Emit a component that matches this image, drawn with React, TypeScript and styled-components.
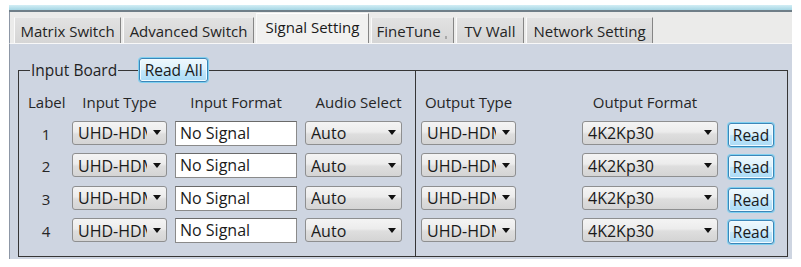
import React from 'react';
import styled, { createGlobalStyle } from 'styled-components';

const Global = createGlobalStyle`
  html, body { margin: 0; padding: 0; background: #ffffff; }
  body {
    font-family: "Open Sans", "Noto Sans", "Liberation Sans", sans-serif;
    font-size: 15px;
    color: #222222;
  }
  * { box-sizing: border-box; }
`;

const Window = styled.div`
  margin: 5px 0 0 9px;
  width: 783px;
  height: 254px;
  display: flex;
  flex-direction: column;
`;

const TitleStrip = styled.div`
  height: 7px;
  background: linear-gradient(#d3eef5, #a5d6e4);
  border-bottom: 2px solid #6f7e88;
`;

const TabBar = styled.div`
  height: 32px;
  background: #ebebea;
  border-left: 1px solid #8d97a6;
  border-bottom: 1px solid #f8f8f8;
  display: flex;
  align-items: flex-end;
  padding-left: 4px;
  gap: 2px;
`;

const Tab = styled.div<{ $w: number; $active?: boolean; $mark?: boolean }>`
  position: relative;
  width: ${(p) => p.$w}px;
  height: ${(p) => (p.$active ? 30 : 26)}px;
  padding-bottom: ${(p) => (p.$active ? 3 : 0)}px;
  display: flex;
  align-items: center;
  justify-content: center;
  white-space: nowrap;
  font-size: 15px;
  color: ${(p) => (p.$active ? '#1a1a1a' : '#242424')};
  background: ${(p) =>
    p.$active ? '#f1f1f0' : 'linear-gradient(#e2e2e2, #d5d5d5)'};
  border-left: 1px solid #fafafa;
  border-right: 1px solid #858585;
  border-top: 1px solid ${(p) => (p.$active ? '#ffffff' : '#ececec')};
  &::after {
    content: '';
    display: ${(p) => (p.$mark ? 'block' : 'none')};
    position: absolute;
    right: 6px;
    bottom: 4px;
    width: 2px;
    height: 3px;
    background: #a8a8a8;
  }
`;

const Panel = styled.div`
  flex: 1;
  background: #ced5e1;
  border-left: 1px solid #8d97a6;
  padding: 26px 4px 0 8px;
`;

const GroupBox = styled.div`
  position: relative;
  border: 1px solid #363636;
  display: grid;
  grid-template-columns: 396px 1fr;
`;

const Legend = styled.div`
  position: absolute;
  top: -13px;
  left: 11px;
  display: flex;
  align-items: center;
  gap: 21px;
`;

const LegendTitle = styled.span`
  background: #ced5e1;
  line-height: 22px;
  padding: 0 1px;
  font-size: 15.5px;
  color: #1f1f1f;
`;

const BlueButton = styled.button<{ $w: number }>`
  width: ${(p) => p.$w}px;
  height: 24px;
  padding: 0;
  font: inherit;
  font-size: 15.5px;
  color: #1a1a1a;
  border: 1px solid #3c86b8;
  border-radius: 3px;
  box-shadow: 0 0 0 1px #7fd0f0, inset 0 0 0 1px #f2fbff;
  background: linear-gradient(#eef8fd 0%, #dcf1fc 48%, #c3e7fb 52%, #aadbf6 100%);
  display: flex;
  align-items: center;
  justify-content: center;
  line-height: 22px;
`;

const ReadButton = styled(BlueButton)`
  margin-top: 2px;
`;

const Section = styled.div<{ $cols: string; $pad: number; $divider?: boolean }>`
  display: grid;
  grid-template-columns: ${(p) => p.$cols};
  grid-template-rows: 21px repeat(4, 25px);
  column-gap: 8px;
  row-gap: 7.5px;
  padding: 21px 0 13px ${(p) => p.$pad}px;
  border-left: ${(p) => (p.$divider ? '1px solid #363636' : 'none')};
  align-items: start;
`;

const Header = styled.div<{ $w?: number; $shift?: number }>`
  width: ${(p) => (p.$w ? `${p.$w}px` : 'auto')};
  padding-left: ${(p) => p.$shift ?? 0}px;
  text-align: center;
  line-height: 21px;
  white-space: nowrap;
  color: #262626;
  justify-self: ${(p) => (p.$w ? 'start' : 'stretch')};
`;

const Num = styled.div`
  align-self: center;
  text-align: center;
  color: #262626;
  line-height: 21px;
  padding-top: 2px;
`;

const ComboBox = styled.div<{ $w: number }>`
  width: ${(p) => p.$w}px;
  height: 24px;
  border: 1px solid #8e8f90;
  border-radius: 3px;
  background: linear-gradient(#f4f4f4 0%, #ececec 45%, #dedede 55%, #d4d4d4 100%);
  display: flex;
  align-items: center;
  padding: 0 0 0 5px;
`;

const ComboText = styled.span`
  flex: 1;
  min-width: 0;
  overflow-x: clip;
  white-space: nowrap;
  line-height: 22px;
  padding-top: 1px;
  font-size: 16px;
  color: #1a1a1a;
`;

const Arrow = styled.span`
  flex: none;
  width: 0;
  height: 0;
  margin: 0 5px 0 6px;
  border-left: 4px solid transparent;
  border-right: 4px solid transparent;
  border-top: 5px solid #111;
`;

const TextBox = styled.div`
  width: 122px;
  height: 25px;
  background: #ffffff;
  border: 1px solid #8a8a8a;
  border-top-color: #6a6a6a;
  padding: 0 4px;
  line-height: 22px;
  font-size: 16px;
  white-space: nowrap;
  color: #1a1a1a;
`;

const Combo = ({ w, text }: { w: number; text: string }) => (
  <ComboBox $w={w}>
    <ComboText>{text}</ComboText>
    <Arrow />
  </ComboBox>
);

const rows = [1, 2, 3, 4];

export default function App() {
  return (
    <>
      <Global />
      <Window>
        <TitleStrip />
        <TabBar>
          <Tab $w={107}>Matrix Switch</Tab>
          <Tab $w={131}>Advanced Switch</Tab>
          <Tab $w={113} $active>Signal Setting</Tab>
          <Tab $w={83} $mark>FineTune&nbsp;&nbsp;</Tab>
          <Tab $w={68}>TV Wall</Tab>
          <Tab $w={127}>Network Setting</Tab>
        </TabBar>
        <Panel>
          <GroupBox>
            <Legend>
              <LegendTitle>Input Board</LegendTitle>
              <BlueButton $w={69}>Read All</BlueButton>
            </Legend>
            <Section $cols="36px 95px 122px 97px" $pad={9}>
              <Header>Label</Header>
              <Header>Input Type</Header>
              <Header>Input Format</Header>
              <Header $shift={10}>Audio Select</Header>
              {rows.map((n) => (
                <React.Fragment key={n}>
                  <Num>{n}</Num>
                  <Combo w={95} text="UHD-HDMI" />
                  <TextBox>No Signal</TextBox>
                  <Combo w={97} text="Auto" />
                </React.Fragment>
              ))}
            </Section>
            <Section $cols="153px 138px 46px" $pad={5} $divider>
              <Header $w={95}>Output Type</Header>
              <Header $w={126}>Output Format</Header>
              <span />
              {rows.map((n) => (
                <React.Fragment key={n}>
                  <Combo w={95} text="UHD-HDMI" />
                  <Combo w={136} text="4K2Kp30" />
                  <ReadButton $w={46}>Read</ReadButton>
                </React.Fragment>
              ))}
            </Section>
          </GroupBox>
        </Panel>
      </Window>
    </>
  );
}
